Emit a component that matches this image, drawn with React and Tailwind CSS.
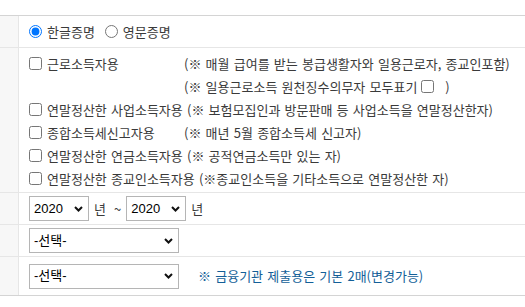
function Chevron() {
  return (
    <svg
      className="pointer-events-none absolute right-[6px] top-1/2 -translate-y-1/2"
      width="9"
      height="6"
      viewBox="0 0 9 6"
    >
      <path d="M1 1l3.5 3.5L8 1" fill="none" stroke="#111" strokeWidth="2" />
    </svg>
  )
}

function Select({ value, width }) {
  return (
    <div className={`relative h-[25px] ${width}`}>
      <select
        defaultValue={value}
        className="h-full w-full appearance-none border border-[#b5b5b5] bg-white pl-[4px] font-['Liberation_Sans','Noto_Sans_CJK_KR',sans-serif] text-[13px] text-black outline-none [word-spacing:0]"
      >
        <option>{value}</option>
      </select>
      <Chevron />
    </div>
  )
}

function Check({ label, desc }) {
  return (
    <div className="flex h-[23px] items-center whitespace-nowrap">
      <input type="checkbox" className="m-0 h-[13px] w-[13px] shrink-0" />
      <span className={desc ? 'ml-[5px] w-[137px] shrink-0' : 'ml-[5px]'}>{label}</span>
      {desc && <span>{desc}</span>}
    </div>
  )
}

function Row({ children, className = '' }) {
  return (
    <div className={`flex border-b border-[#e6e6e6] ${className}`}>
      <div className="w-[19px] shrink-0 border-r border-[#e6e6e6] bg-[#f7f7f7]" />
      <div className="min-w-0 flex-1 pl-[10px]">{children}</div>
    </div>
  )
}

export default function App() {
  return (
    <div className="h-[307px] w-[525px] overflow-hidden bg-white pt-[15px] font-['Noto_Sans_CJK_KR','Noto_Sans',sans-serif] text-[13px] text-[#3a3a3a] [word-spacing:1.3px]">
      <div className="border-t border-[#d4d4d4]">
        <Row className="h-[32px]">
          <div className="flex h-full items-center">
            <input type="radio" name="lang" defaultChecked className="m-0 h-[13px] w-[13px]" />
            <span className="ml-[5px]">한글증명</span>
            <input type="radio" name="lang" className="m-0 ml-[10px] h-[13px] w-[13px]" />
            <span className="ml-[5px]">영문증명</span>
          </div>
        </Row>
        <Row className="h-[145px]">
          <div className="pt-[4px]">
            <Check label="근로소득자용" desc="(※ 매월 급여를 받는 봉급생활자와 일용근로자, 종교인포함)" />
            <div className="flex h-[23px] items-center whitespace-nowrap pl-[155px]">
              <span>(※ 일용근로소득 원천징수의무자 모두표기</span>
              <input type="checkbox" className="m-0 ml-[4px] h-[13px] w-[13px]" />
              <span className="ml-[11px]">)</span>
            </div>
            <Check label="연말정산한 사업소득자용 (※ 보험모집인과 방문판매 등 사업소득을 연말정산한자)" />
            <Check label="종합소득세신고자용" desc="(※ 매년 5월 종합소득세 신고자)" />
            <Check label="연말정산한 연금소득자용 (※ 공적연금소득만 있는 자)" />
            <Check label="연말정산한 종교인소득자용 (※종교인소득을 기타소득으로 연말정산한 자)" />
          </div>
        </Row>
        <Row className="h-[32px]">
          <div className="flex h-full items-center">
            <Select value="2020" width="w-[60px]" />
            <span className="ml-[5px]">년</span>
            <span className="ml-[8px]">~</span>
            <div className="ml-[5px]">
              <Select value="2020" width="w-[60px]" />
            </div>
            <span className="ml-[5px]">년</span>
          </div>
        </Row>
        <Row className="h-[32px]">
          <div className="flex h-full items-center">
            <Select value="-선택-" width="w-[150px]" />
          </div>
        </Row>
        <Row className="h-[39px] border-b-[#d4d4d4]">
          <div className="flex h-full items-center">
            <Select value="-선택-" width="w-[150px]" />
            <span className="ml-[19px] text-[#135f98]">※ 금융기관 제출용은 기본 2매(변경가능)</span>
          </div>
        </Row>
      </div>
    </div>
  )
}
